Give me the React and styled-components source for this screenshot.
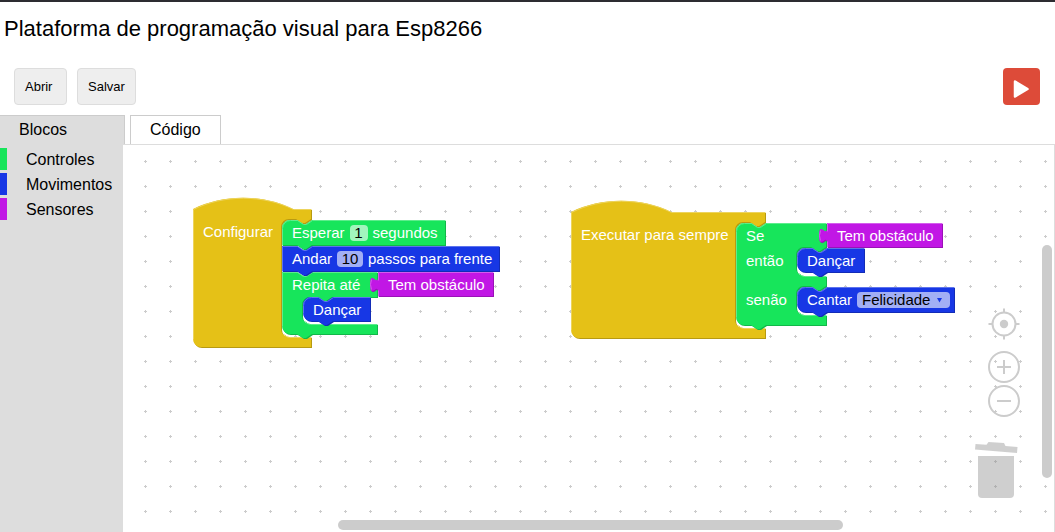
import React from 'react';
import styled, { createGlobalStyle } from 'styled-components';

const GlobalStyle = createGlobalStyle`
  * { box-sizing: border-box; }
  body {
    margin: 0;
    background: #fff;
    color: #000;
    font-family: Arial, "Liberation Sans", sans-serif;
    font-size: 16px;
  }
`;

const palette = {
  yellow: { main: '#e5c117', dark: '#b79a12', light: '#edd45d' },
  green: { main: '#17e55b', dark: '#12b749', light: '#5ded8c' },
  blue: { main: '#1737e5', dark: '#122cb7', light: '#5d73ed' },
  purple: { main: '#c117e5', dark: '#9a12b7', light: '#d45ded' },
};

/* ---------- page frame ---------- */

const Page = styled.div`
  display: flex;
  flex-direction: column;
  min-height: 100vh;
  border-top: 2px solid #2d2c31;
`;

const Title = styled.h1`
  margin: 0;
  padding: 14px 4px 0;
  font-size: 22px;
  line-height: 26px;
  font-weight: 400;
`;

const Toolbar = styled.div`
  display: flex;
  gap: 10px;
  padding: 26px 15px 10px 14px;
`;

const ToolButton = styled.button`
  min-width: 53px;
  height: 37px;
  padding: 0 10px;
  border: 1px solid #ddd;
  border-radius: 4px;
  background: #eee;
  color: #000;
  font: 13px Arial, "Liberation Sans", sans-serif;
  text-align: left;
`;

const RunButton = styled.button`
  display: flex;
  align-items: center;
  justify-content: center;
  width: 37px;
  height: 37px;
  margin-left: auto;
  padding: 4px 2px 0 0;
  border: 0;
  border-radius: 4px;
  background: #dd4b39;
`;

const TabBar = styled.div`
  display: flex;
  gap: 5px;
  height: 29px;
`;

const Tab = styled.button`
  padding: 0 19px;
  border: 1px solid #ccc;
  border-bottom: 0;
  background: ${(p) => (p.$active ? '#ddd' : '#fff')};
  color: #000;
  font: 16px Arial, "Liberation Sans", sans-serif;
  text-align: left;
  ${(p) => p.$active && 'width: 125px; border-left: 0;'}
`;

const Editor = styled.main`
  display: flex;
  flex: 1;
`;

const Toolbox = styled.nav`
  width: 123px;
  padding-top: 4px;
  background: #ddd;
`;

const Category = styled.a`
  display: block;
  height: 22px;
  margin-bottom: 3px;
  padding-left: 19px;
  border-left: 7px solid ${(p) => p.$color};
  color: #000;
  line-height: 24px;
  text-decoration: none;
`;

const Workspace = styled.section`
  position: relative;
  flex: 1;
  overflow: hidden;
  border: solid #ddd;
  border-width: 1px 1px 0 0;
`;

const Grid = styled.svg`
  position: absolute;
  inset: 0;
  width: 100%;
  height: 100%;
`;

/* ---------- blocks ---------- */

const BlockBox = styled.div`
  position: absolute;
  left: ${(p) => p.$x}px;
  top: ${(p) => p.$y}px;
  width: ${(p) => p.$w}px;
  height: ${(p) => p.$h}px;
  padding-top: ${(p) => p.$top}px;
  color: #fff;
  font-size: 15px;
`;

const Shape = styled.svg`
  position: absolute;
  left: 0;
  top: 0;
  width: 100%;
  height: 100%;
  overflow: visible;
`;

const Row = styled.div`
  position: relative;
  display: flex;
  align-items: center;
  gap: 5px;
  height: ${(p) => p.$h || 25}px;
  padding: 0 0 ${(p) => (p.$h ? p.$h - 25 : 0)}px 10px;
  white-space: nowrap;
`;

const NumberField = styled.input`
  width: ${(p) => p.$w}px;
  height: 16px;
  padding: 0;
  border: 0;
  border-radius: 4px;
  background: rgba(255, 255, 255, 0.6);
  color: #000;
  font: 15px/16px Arial, "Liberation Sans", sans-serif;
  text-align: center;
`;

const SelectWrap = styled.span`
  position: relative;
  display: flex;
`;

const SelectField = styled.select`
  appearance: none;
  width: 93px;
  height: 16px;
  padding: 0 5px;
  border: 0;
  border-radius: 4px;
  background: rgba(255, 255, 255, 0.6);
  color: #000;
  font: 15px/16px Arial, "Liberation Sans", sans-serif;
`;

const Arrow = styled.svg`
  position: absolute;
  right: 7px;
  top: 5px;
  pointer-events: none;
`;

const NOTCH = 'l 6,4 3,0 6,-4';

function topEdge(kind, square, w) {
  if (kind === 'hat') return `M 0,0 c 30,-15 70,-15 100,0 H ${w}`;
  if (kind === 'value') return `M 0,0 H ${w}`;
  return `${square ? 'M 0,0' : 'M 0,8 A 8,8 0 0,1 8,0'} H 15 ${NOTCH} H ${w}`;
}

function outline({ kind, w, h, inputs = [], squareTop, squareBottom }) {
  const slots = inputs
    .map(
      ({ x, from, to }) =>
        `V ${from} H ${x + 30} l -6,4 -3,0 -6,-4 h -7 a 8,8 0 0,0 -8,8 V ${to - 8} a 8,8 0 0,0 8,8 H ${w}`
    )
    .join(' ');
  if (kind === 'value') {
    return `${topEdge(kind, true, w)} V ${h} H 0 V 20 c 0,-10 -8,8 -8,-7.5 s 8,2.5 8,-7.5 Z`;
  }
  const foot = kind === 'hat' ? `V ${h}` : `V ${h} H 30 l -6,4 -3,0 -6,-4`;
  const corner = squareBottom ? 'H 0 Z' : 'H 8 a 8,8 0 0,1 -8,-8 Z';
  return `${topEdge(kind, squareTop, w)} ${slots} ${foot} ${corner}`;
}

function highlight({ kind, w, h, inputs = [], squareTop, squareBottom }) {
  const left =
    kind === 'value'
      ? `M 0,${h} V 18 M -7,17 q -2,-5 0,-10 M 0,8 V 0`
      : `M 0,${squareBottom ? h : h - 8} V ${squareTop || kind === 'hat' ? 0 : 8}`;
  const slots = inputs
    .map(({ x, to }) => `M ${x + 3},${to - 3} q 2,3 5,3 H ${w}`)
    .join(' ');
  return `${left} ${topEdge(kind, squareTop, w)} ${slots}`;
}

function Block({ x, y, color, top = 0, children, ...shape }) {
  const c = palette[color];
  const d = outline(shape);
  return (
    <BlockBox $x={x} $y={y} $w={shape.w} $h={shape.h} $top={top}>
      <Shape aria-hidden="true">
        <path d={d} fill={c.dark} transform="translate(1,1)" />
        <path d={d} fill={c.main} />
        <path
          d={highlight(shape)}
          fill="none"
          stroke={c.light}
          strokeWidth="1"
          transform="translate(0.5,0.5)"
        />
      </Shape>
      {children}
    </BlockBox>
  );
}

/* ---------- floating workspace controls ---------- */

const ZoomControls = styled.div`
  position: absolute;
  right: 34px;
  bottom: 115px;
  display: flex;
  flex-direction: column;
  gap: 2px;
`;

const IconButton = styled.button`
  display: block;
  width: 32px;
  height: 32px;
  margin-bottom: ${(p) => (p.$spaced ? 9 : 0)}px;
  padding: 0;
  border: 0;
  background: none;
`;

const Trash = styled.svg`
  position: absolute;
  right: 36px;
  bottom: 34px;
`;

const ScrollHandle = styled.div`
  position: absolute;
  border-radius: 5px;
  background: #ccc;
  ${(p) =>
    p.$vertical
      ? 'right: 2px; top: 100px; bottom: 54px; width: 10px;'
      : 'left: 215px; right: 211px; bottom: 2px; height: 10px;'}
`;

const iconStroke = { fill: 'none', stroke: '#ccc', strokeWidth: 2 };

export default function App() {
  return (
    <>
      <GlobalStyle />
      <Page>
        <Title>Plataforma de programação visual para Esp8266</Title>
        <Toolbar>
          <ToolButton>Abrir</ToolButton>
          <ToolButton>Salvar</ToolButton>
          <RunButton aria-label="Executar">
            <svg width="16" height="18" viewBox="0 0 16 18">
              <path
                d="M2 1.5 L14.5 9 L2 16.5 Z"
                fill="#fff"
                stroke="#fff"
                strokeWidth="2.5"
                strokeLinejoin="round"
              />
            </svg>
          </RunButton>
        </Toolbar>
        <TabBar>
          <Tab $active>Blocos</Tab>
          <Tab>Código</Tab>
        </TabBar>
        <Editor>
          <Toolbox>
            <Category href="#controles" $color={palette.green.main}>Controles</Category>
            <Category href="#movimentos" $color={palette.blue.main}>Movimentos</Category>
            <Category href="#sensores" $color={palette.purple.main}>Sensores</Category>
          </Toolbox>
          <Workspace>
            <Grid aria-hidden="true">
              <defs>
                <pattern id="grid" x="10" y="4" width="25" height="25" patternUnits="userSpaceOnUse">
                  <path d="M 11,12.5 h 3 M 12.5,11 v 3" stroke="#ccc" strokeWidth="1" />
                </pattern>
              </defs>
              <rect width="100%" height="100%" fill="url(#grid)" />
            </Grid>

            <Block x={70} y={64} color="yellow" kind="hat" w={118} h={138} top={10}
              inputs={[{ x: 88, from: 10, to: 128 }]}>
              <Row>Configurar</Row>
            </Block>
            <Block x={159} y={75} color="green" kind="stack" w={163} h={25} squareBottom>
              <Row>
                <label htmlFor="wait">Esperar</label>
                <NumberField id="wait" $w={18} defaultValue="1" />
                segundos
              </Row>
            </Block>
            <Block x={159} y={127} color="green" kind="stack" w={95} h={62} squareTop
              inputs={[{ x: 20, from: 25, to: 52 }]}>
              <Row>Repita até</Row>
            </Block>
            <Block x={159} y={101} color="blue" kind="stack" w={217} h={25} squareTop squareBottom>
              <Row>
                <label htmlFor="steps">Andar</label>
                <NumberField id="steps" $w={26} defaultValue="10" />
                passos para frente
              </Row>
            </Block>
            <Block x={255} y={127} color="purple" kind="value" w={115} h={24}>
              <Row>Tem obstáculo</Row>
            </Block>
            <Block x={180} y={152} color="blue" kind="stack" w={67} h={24}>
              <Row>Dançar</Row>
            </Block>

            <Block x={448} y={67} color="yellow" kind="hat" w={194} h={126} top={10}
              inputs={[{ x: 164, from: 10, to: 116 }]}>
              <Row>Executar para sempre</Row>
            </Block>
            <Block x={613} y={78} color="green" kind="stack" w={90} h={102}
              inputs={[
                { x: 60, from: 24, to: 53 },
                { x: 60, from: 63, to: 92 },
              ]}>
              <Row>Se</Row>
              <Row $h={39}>então</Row>
              <Row>senão</Row>
            </Block>
            <Block x={704} y={78} color="purple" kind="value" w={115} h={24}>
              <Row>Tem obstáculo</Row>
            </Block>
            <Block x={674} y={103} color="blue" kind="stack" w={67} h={24}>
              <Row>Dançar</Row>
            </Block>
            <Block x={674} y={142} color="blue" kind="stack" w={157} h={25}>
              <Row>
                <label htmlFor="song">Cantar</label>
                <SelectWrap>
                  <SelectField id="song" defaultValue="Felicidade">
                    <option>Felicidade</option>
                  </SelectField>
                  <Arrow width="7" height="6" viewBox="0 0 7 6">
                    <path d="M 1,1 H 6 L 3.5,5.5 Z" fill={palette.blue.main} />
                  </Arrow>
                </SelectWrap>
              </Row>
            </Block>

            <ZoomControls>
              <IconButton $spaced aria-label="Centralizar">
                <svg width="32" height="32" viewBox="0 0 32 32" {...iconStroke}>
                  <circle cx="16" cy="16" r="11.5" />
                  <circle cx="16" cy="16" r="4.2" fill="#ccc" stroke="none" />
                  <path d="M16 0.5 V4.5 M16 27.5 V31.5 M0.5 16 H4.5 M27.5 16 H31.5" />
                </svg>
              </IconButton>
              <IconButton aria-label="Aumentar zoom">
                <svg width="32" height="32" viewBox="0 0 32 32" {...iconStroke}>
                  <circle cx="16" cy="16" r="15" />
                  <path d="M16 9 V23 M9 16 H23" />
                </svg>
              </IconButton>
              <IconButton aria-label="Diminuir zoom">
                <svg width="32" height="32" viewBox="0 0 32 32" {...iconStroke}>
                  <circle cx="16" cy="16" r="15" />
                  <path d="M9 16 H23" />
                </svg>
              </IconButton>
            </ZoomControls>
            <Trash width="44" height="58" viewBox="0 0 44 58" fill="#888" fillOpacity="0.4">
              <path d="M 1.5,4 L 12.5,4.8 L 14.5,2 L 30,3 L 31.5,6 L 43.5,7 L 43,13 L 1,9.5 Z" />
              <path d="M 4,16 H 40 V 54 a 4,4 0 0,1 -4,4 H 8 a 4,4 0 0,1 -4,-4 Z" />
            </Trash>
            <ScrollHandle $vertical />
            <ScrollHandle />
          </Workspace>
        </Editor>
      </Page>
    </>
  );
}
